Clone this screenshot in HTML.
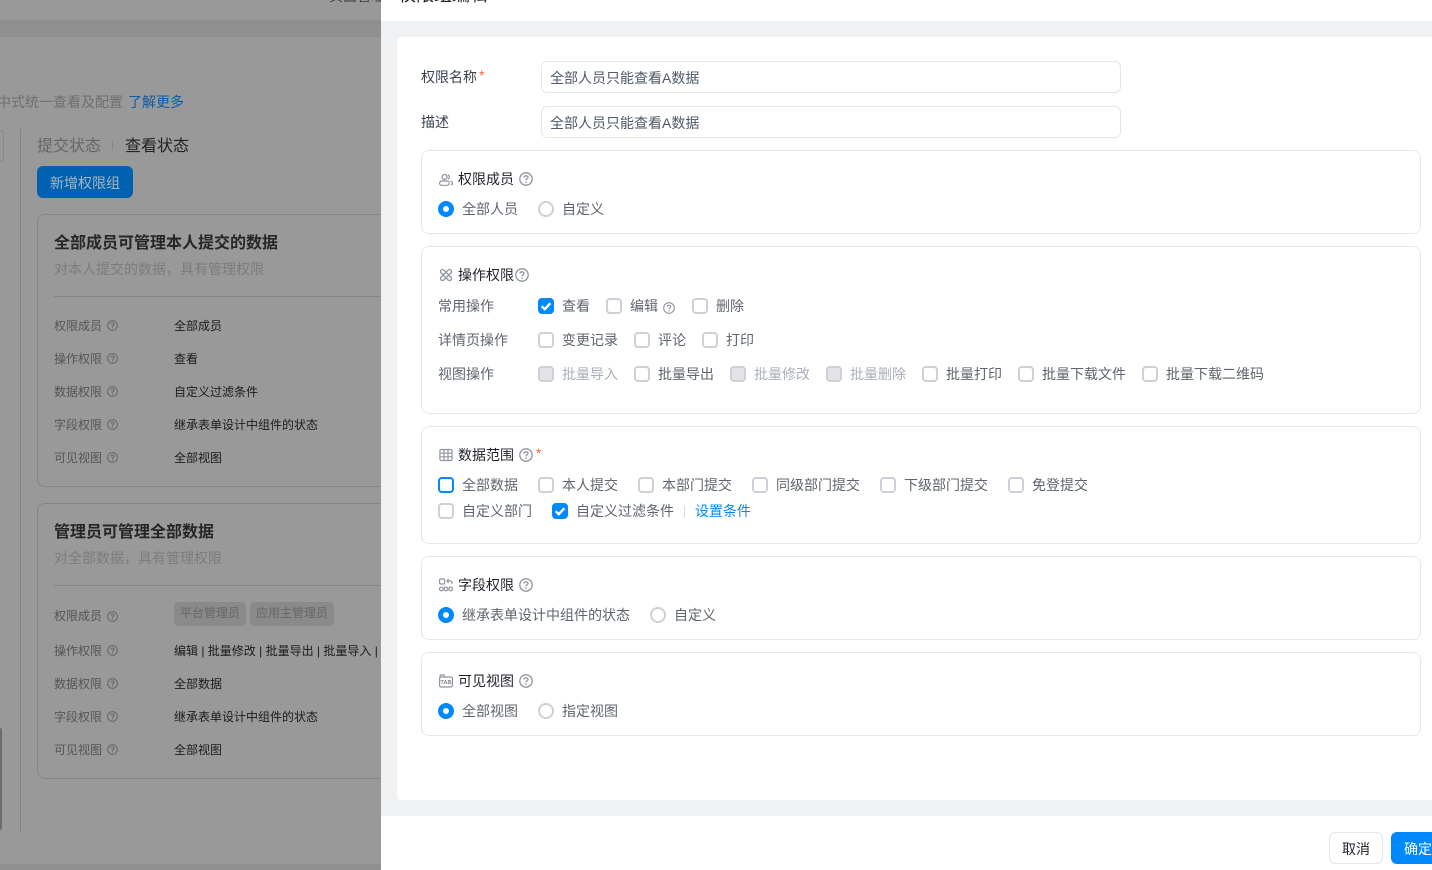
<!DOCTYPE html>
<html lang="zh">
<head>
<meta charset="utf-8">
<style>
html,body{margin:0;padding:0;width:1432px;height:870px;overflow:hidden;background:#999}
body{position:relative;font-family:"Liberation Sans","Noto Sans CJK SC",sans-serif;font-size:14px;color:#1f2329}
.a{position:absolute;box-sizing:border-box}
.t{position:absolute;white-space:nowrap;line-height:20px;height:20px}
.l{color:#555;font-size:12px}
.v{color:#1c1c1c;font-size:12px}
.g{color:#a9aeb8}
.k{color:#5f656e}
.sec{position:absolute;left:421px;width:1000px;border:1px solid #e5e6eb;border-radius:8px;box-sizing:border-box;background:#fff}
.cb,.rd{position:absolute;width:16px;height:16px;box-sizing:border-box;left:0;top:0}
.cb{border:2px solid #cdd0d6;border-radius:4px;background:#fff}
.cb.dis{background:#e2e4e8}
.cb.foc{border:2px solid #0089ff}
.cb.on{background:#0089ff;border-color:#0089ff}
.cb svg{position:absolute;left:-2px;top:-2px;display:block}
.rd{border:2px solid #cdd0d6;border-radius:50%;background:#fff}
.rd.on{border:5px solid #0089ff}
.ic{position:absolute;overflow:visible}
</style>
</head>
<body>
<svg width="0" height="0" style="position:absolute">
<defs>
<symbol id="h" viewBox="0 0 14 14"><circle cx="7" cy="7" r="6.2" fill="none" stroke="currentColor" stroke-width="1.3"/><path d="M5 5.6C5 4.5 5.9 3.8 7 3.8S9 4.6 9 5.5C9 6.8 7 6.8 7 8.4" fill="none" stroke="currentColor" stroke-width="1.3"/><circle cx="7" cy="10.2" r=".8" fill="currentColor"/></symbol>
<symbol id="c" viewBox="0 0 16 16"><path d="M3.6 8.2L6.8 11.2L12.4 5.2" fill="none" stroke="#fff" stroke-width="2.4"/></symbol>
</defs>
</svg>

<!-- background page -->
<div class="a" style="left:0;top:20px;width:381px;height:17px;background:#8f8f8f"></div>
<div class="a" style="left:0;top:864px;width:381px;height:6px;background:#8f8f8f"></div>
<div class="t" style="left:329px;top:-14px;font-size:14px;color:#444">页面管理</div>
<div class="t" style="left:-3px;top:92px;color:#6f6f6f">中式统一查看及配置</div>
<div class="t" style="left:128px;top:92px;color:#0a5ca8">了解更多</div>
<div class="a" style="left:-8px;top:130px;width:12px;height:32px;border:1px solid #888;border-radius:4px"></div>
<div class="a" style="left:20px;top:129px;width:1px;height:703px;background:#858585"></div>
<div class="a" style="left:0;top:728px;width:2px;height:102px;background:#6d6d6d;border-radius:0 2px 2px 0"></div>
<div class="t" style="left:37px;top:137px;font-size:16px;color:#666">提交状态</div>
<div class="a" style="left:112px;top:141px;width:1px;height:9px;background:#888"></div>
<div class="t" style="left:125px;top:137px;font-size:16px;color:#222">查看状态</div>
<div class="a" style="left:37px;top:166px;width:96px;height:32px;background:#0062b0;border-radius:6px"></div>
<div class="t" style="left:50px;top:173px;color:#a8b4bf">新增权限组</div>

<div class="a" style="left:37px;top:214px;width:360px;height:273px;border:1px solid #858585;border-radius:8px"></div>
<div class="t" style="left:54px;top:234px;font-size:16px;font-weight:bold;color:#262626">全部成员可管理本人提交的数据</div>
<div class="t" style="left:54px;top:259px;color:#7c7c7c">对本人提交的数据，具有管理权限</div>
<div class="a" style="left:54px;top:296px;width:330px;height:1px;background:#858585"></div>
<div class="t l" style="left:54px;top:316px">权限成员</div><svg class="ic" style="left:107px;top:320px;color:#666" width="11" height="11"><use href="#h"/></svg><div class="t v" style="left:174px;top:316px">全部成员</div>
<div class="t l" style="left:54px;top:349px">操作权限</div><svg class="ic" style="left:107px;top:353px;color:#666" width="11" height="11"><use href="#h"/></svg><div class="t v" style="left:174px;top:349px">查看</div>
<div class="t l" style="left:54px;top:382px">数据权限</div><svg class="ic" style="left:107px;top:386px;color:#666" width="11" height="11"><use href="#h"/></svg><div class="t v" style="left:174px;top:382px">自定义过滤条件</div>
<div class="t l" style="left:54px;top:415px">字段权限</div><svg class="ic" style="left:107px;top:419px;color:#666" width="11" height="11"><use href="#h"/></svg><div class="t v" style="left:174px;top:415px">继承表单设计中组件的状态</div>
<div class="t l" style="left:54px;top:448px">可见视图</div><svg class="ic" style="left:107px;top:452px;color:#666" width="11" height="11"><use href="#h"/></svg><div class="t v" style="left:174px;top:448px">全部视图</div>

<div class="a" style="left:37px;top:503px;width:360px;height:276px;border:1px solid #858585;border-radius:8px"></div>
<div class="t" style="left:54px;top:523px;font-size:16px;font-weight:bold;color:#262626">管理员可管理全部数据</div>
<div class="t" style="left:54px;top:548px;color:#7c7c7c">对全部数据，具有管理权限</div>
<div class="a" style="left:54px;top:585px;width:330px;height:1px;background:#858585"></div>
<div class="t l" style="left:54px;top:606px">权限成员</div><svg class="ic" style="left:107px;top:611px;color:#666" width="11" height="11"><use href="#h"/></svg>
<div class="a" style="left:174px;top:602px;width:72px;height:24px;background:#8a8a8a;border-radius:4px"></div>
<div class="t" style="left:180px;top:603px;font-size:12px;color:#666">平台管理员</div>
<div class="a" style="left:250px;top:602px;width:84px;height:24px;background:#8a8a8a;border-radius:4px"></div>
<div class="t" style="left:256px;top:603px;font-size:12px;color:#666">应用主管理员</div>
<div class="t l" style="left:54px;top:641px">操作权限</div><svg class="ic" style="left:107px;top:645px;color:#666" width="11" height="11"><use href="#h"/></svg><div class="t v" style="left:174px;top:641px">编辑 | 批量修改 | 批量导出 | 批量导入 |</div>
<div class="t l" style="left:54px;top:674px">数据权限</div><svg class="ic" style="left:107px;top:678px;color:#666" width="11" height="11"><use href="#h"/></svg><div class="t v" style="left:174px;top:674px">全部数据</div>
<div class="t l" style="left:54px;top:707px">字段权限</div><svg class="ic" style="left:107px;top:711px;color:#666" width="11" height="11"><use href="#h"/></svg><div class="t v" style="left:174px;top:707px">继承表单设计中组件的状态</div>
<div class="t l" style="left:54px;top:740px">可见视图</div><svg class="ic" style="left:107px;top:744px;color:#666" width="11" height="11"><use href="#h"/></svg><div class="t v" style="left:174px;top:740px">全部视图</div>

<!-- drawer -->
<div class="a" style="left:381px;top:0;width:1051px;height:870px;background:#fff"></div>
<div class="t" style="left:398px;top:-15px;font-size:18px;color:#1f2329">权限组编辑</div>
<div class="a" style="left:381px;top:21px;width:1051px;height:795px;background:#f0f1f3"></div>
<div class="a" style="left:397px;top:37px;width:1040px;height:763px;background:#fff;border-radius:4px"></div>

<div class="t" style="left:421px;top:67px;color:#3a4350">权限名称</div>
<div class="t" style="left:479px;top:65px;color:#f5623b">*</div>
<div class="a" style="left:541px;top:61px;width:580px;height:32px;border:1px solid #e5e6eb;border-radius:6px"></div>
<div class="t" style="left:550px;top:68px;color:#4e5969">全部人员只能查看A数据</div>
<div class="t" style="left:421px;top:112px;color:#3a4350">描述</div>
<div class="a" style="left:541px;top:106px;width:580px;height:32px;border:1px solid #e5e6eb;border-radius:6px"></div>
<div class="t" style="left:550px;top:113px;color:#4e5969">全部人员只能查看A数据</div>

<div class="sec" style="top:150px;height:84px"></div>
<div class="sec" style="top:246px;height:168px"></div>
<div class="sec" style="top:426px;height:118px"></div>
<div class="sec" style="top:556px;height:84px"></div>
<div class="sec" style="top:652px;height:84px"></div>

<!-- section 1 -->
<svg class="ic" style="left:439px;top:174px" width="14" height="12" viewBox="0 0 14 12" fill="none" stroke="#8f959e" stroke-width="1.2"><circle cx="5.5" cy="3" r="2.5"/><path d="M9 .8a2.5 2.5 0 0 1 0 4.4"/><rect x=".6" y="7" width="9.6" height="4.3" rx="2.1"/><path d="M11.6 7.2c1.1.3 1.8 1 1.8 2s-.5 1.6-1.3 1.9"/></svg>
<div class="t" style="left:458px;top:169px">权限成员</div>
<svg class="ic" style="left:519px;top:172px;color:#8f959e" width="14" height="14"><use href="#h"/></svg>
<div class="rd on" style="left:438px;top:201px"></div><div class="t k" style="left:462px;top:199px">全部人员</div>
<div class="rd" style="left:538px;top:201px"></div><div class="t k" style="left:562px;top:199px">自定义</div>

<!-- section 2 -->
<svg class="ic" style="left:440px;top:269px" width="12" height="12" viewBox="0 0 12 12" fill="none" stroke="#8f959e" stroke-width="1.3"><rect x="-1" y="4" width="14" height="4" rx="2" transform="rotate(45 6 6)"/><rect x="-1" y="4" width="14" height="4" rx="2" transform="rotate(-45 6 6)"/></svg>
<div class="t" style="left:458px;top:265px">操作权限</div>
<svg class="ic" style="left:515px;top:268px;color:#8f959e" width="14" height="14"><use href="#h"/></svg>

<div class="t k" style="left:438px;top:296px">常用操作</div>
<div class="cb on" style="left:538px;top:298px"><svg width="16" height="16"><use href="#c"/></svg></div><div class="t k" style="left:562px;top:296px">查看</div>
<div class="cb" style="left:606px;top:298px"></div><div class="t k" style="left:630px;top:296px">编辑</div>
<svg class="ic" style="left:663px;top:302px;color:#8f959e" width="12" height="12"><use href="#h"/></svg>
<div class="cb" style="left:692px;top:298px"></div><div class="t k" style="left:716px;top:296px">删除</div>

<div class="t k" style="left:438px;top:330px">详情页操作</div>
<div class="cb" style="left:538px;top:332px"></div><div class="t k" style="left:562px;top:330px">变更记录</div>
<div class="cb" style="left:634px;top:332px"></div><div class="t k" style="left:658px;top:330px">评论</div>
<div class="cb" style="left:702px;top:332px"></div><div class="t k" style="left:726px;top:330px">打印</div>

<div class="t k" style="left:438px;top:364px">视图操作</div>
<div class="cb dis" style="left:538px;top:366px"></div><div class="t g" style="left:562px;top:364px">批量导入</div>
<div class="cb" style="left:634px;top:366px"></div><div class="t k" style="left:658px;top:364px">批量导出</div>
<div class="cb dis" style="left:730px;top:366px"></div><div class="t g" style="left:754px;top:364px">批量修改</div>
<div class="cb dis" style="left:826px;top:366px"></div><div class="t g" style="left:850px;top:364px">批量删除</div>
<div class="cb" style="left:922px;top:366px"></div><div class="t k" style="left:946px;top:364px">批量打印</div>
<div class="cb" style="left:1018px;top:366px"></div><div class="t k" style="left:1042px;top:364px">批量下载文件</div>
<div class="cb" style="left:1142px;top:366px"></div><div class="t k" style="left:1166px;top:364px">批量下载二维码</div>

<!-- section 3 -->
<svg class="ic" style="left:439px;top:448px" width="14" height="14" viewBox="0 0 14 14" fill="none" stroke="#8f959e" stroke-width="1.2"><rect x=".9" y="1.5" width="12.2" height="11" rx="1.5"/><path d="M.9 5.2h12.2M.9 8.8h12.2M5 1.5v11M9 1.5v11"/></svg>
<div class="t" style="left:458px;top:445px">数据范围</div>
<svg class="ic" style="left:519px;top:448px;color:#8f959e" width="14" height="14"><use href="#h"/></svg>
<div class="t" style="left:536px;top:443px;color:#f5623b">*</div>

<div class="cb foc" style="left:438px;top:477px"></div><div class="t k" style="left:462px;top:475px">全部数据</div>
<div class="cb" style="left:538px;top:477px"></div><div class="t k" style="left:562px;top:475px">本人提交</div>
<div class="cb" style="left:638px;top:477px"></div><div class="t k" style="left:662px;top:475px">本部门提交</div>
<div class="cb" style="left:752px;top:477px"></div><div class="t k" style="left:776px;top:475px">同级部门提交</div>
<div class="cb" style="left:880px;top:477px"></div><div class="t k" style="left:904px;top:475px">下级部门提交</div>
<div class="cb" style="left:1008px;top:477px"></div><div class="t k" style="left:1032px;top:475px">免登提交</div>

<div class="cb" style="left:438px;top:503px"></div><div class="t k" style="left:462px;top:501px">自定义部门</div>
<div class="cb on" style="left:552px;top:503px"><svg width="16" height="16"><use href="#c"/></svg></div><div class="t k" style="left:576px;top:501px">自定义过滤条件</div>
<div class="a" style="left:684px;top:506px;width:1px;height:11px;background:#d5d8dd"></div>
<div class="t" style="left:695px;top:501px;color:#0089ff">设置条件</div>

<!-- section 4 -->
<svg class="ic" style="left:439px;top:578px" width="14" height="14" viewBox="0 0 14 14" fill="none" stroke="#8f959e" stroke-width="1.2"><rect x=".6" y="1" width="5" height="5" rx="1"/><path d="M8 3h3.5a1.5 1.5 0 0 1 1.5 1.5V6M9.6 1L8 3l1.6 2"/><circle cx="2.3" cy="11" r="1.8"/><circle cx="7" cy="11" r="1.8"/><circle cx="11.7" cy="11" r="1.8"/></svg>
<div class="t" style="left:458px;top:575px">字段权限</div>
<svg class="ic" style="left:519px;top:578px;color:#8f959e" width="14" height="14"><use href="#h"/></svg>
<div class="rd on" style="left:438px;top:607px"></div><div class="t k" style="left:462px;top:605px">继承表单设计中组件的状态</div>
<div class="rd" style="left:650px;top:607px"></div><div class="t k" style="left:674px;top:605px">自定义</div>

<!-- section 5 -->
<svg class="ic" style="left:439px;top:674px" width="14" height="14" viewBox="0 0 14 14" fill="none" stroke="#8f959e" stroke-width="1.2"><path d="M1 3V2a1 1 0 0 1 1-1h3l1 2"/><rect x=".6" y="3" width="12.8" height="10" rx="1.5"/><text x="7" y="10.2" font-size="5.5" text-anchor="middle" fill="#7f858e" stroke="none" font-family="Liberation Sans,sans-serif" font-weight="bold">TAB</text></svg>
<div class="t" style="left:458px;top:671px">可见视图</div>
<svg class="ic" style="left:519px;top:674px;color:#8f959e" width="14" height="14"><use href="#h"/></svg>
<div class="rd on" style="left:438px;top:703px"></div><div class="t k" style="left:462px;top:701px">全部视图</div>
<div class="rd" style="left:538px;top:703px"></div><div class="t k" style="left:562px;top:701px">指定视图</div>

<!-- footer -->
<div class="a" style="left:1329px;top:832px;width:54px;height:32px;border:1px solid #e5e6eb;border-radius:6px;background:#fff"></div>
<div class="t" style="left:1342px;top:839px;color:#1f2329">取消</div>
<div class="a" style="left:1391px;top:832px;width:60px;height:32px;background:#0089ff;border-radius:6px"></div>
<div class="t" style="left:1404px;top:839px;color:#fff">确定</div>
</body>
</html>
